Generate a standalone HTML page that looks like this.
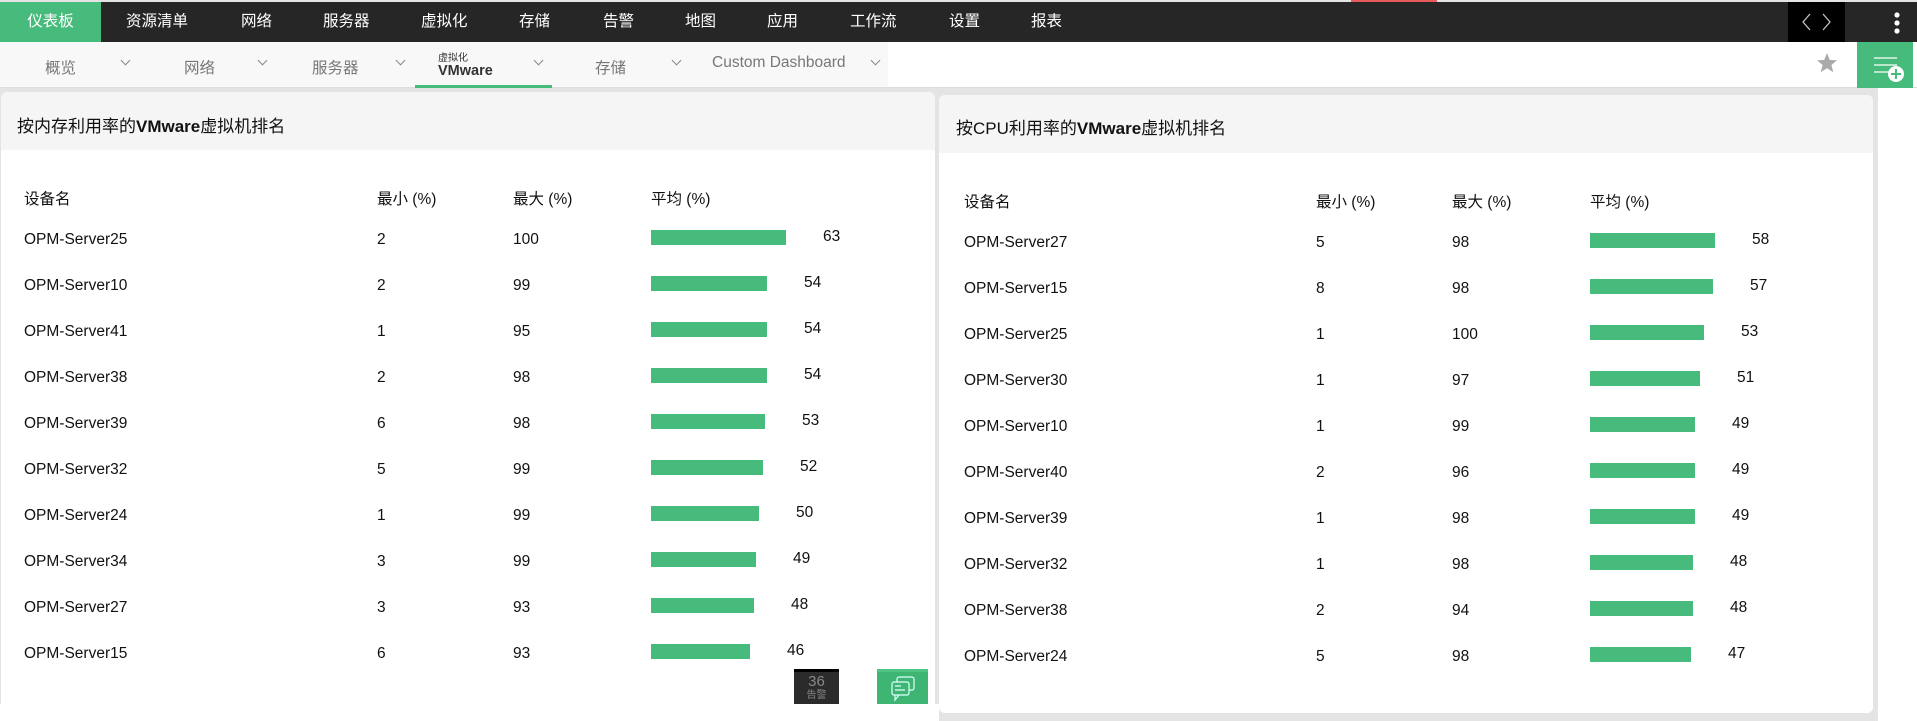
<!DOCTYPE html>
<html><head><meta charset="utf-8"><style>
*{margin:0;padding:0;box-sizing:border-box}
body{width:1917px;height:721px;position:relative;overflow:hidden;background:#fff;font-family:"Liberation Sans","Noto Sans CJK SC",sans-serif;color:#222}
.a{position:absolute;white-space:nowrap}
#top{position:absolute;left:0;top:0;width:1917px;height:2px;background:#e4e4e4}
#nav{position:absolute;left:0;top:2px;width:1917px;height:40px;background:#262626}
.ni{position:absolute;top:0;height:40px;line-height:40px;color:#fff;font-size:15.5px}
#sub{position:absolute;left:0;top:42px;width:1917px;height:46px;background:#fff;border-bottom:1px solid #ddd}
.si{position:absolute;top:14px;font-size:15.5px;color:#777}
.ch{position:absolute;top:15px;width:7px;height:7px;border-right:1px solid #888;border-bottom:1px solid #888;transform:rotate(45deg)}
.panel{position:absolute;background:#fff}
.ph{position:absolute;left:0;top:0;right:0;background:#f5f5f5;border-radius:6px 6px 0 0}
.t{position:absolute;font-size:15px;color:#111}
.bar{position:absolute;height:15px;background:#47bb7c}
</style></head><body>
<div style="position:absolute;left:0;top:88px;width:1917px;height:633px;background:#e4e4e4"></div>
<div style="position:absolute;left:1878px;top:88px;width:39px;height:633px;background:#fff"></div>
<div style="position:absolute;left:0;top:704px;width:939px;height:17px;background:#fff"></div>
<div id="top"></div>
<div style="position:absolute;left:1351px;top:0;width:86px;height:2px;background:#e85a5a"></div>
<div id="nav">
 <div class="ni" style="left:0;width:101px;background:#47bb7c;text-align:center">仪表板</div>
 <div class="ni" style="left:126px">资源清单</div>
 <div class="ni" style="left:241px">网络</div>
 <div class="ni" style="left:323px">服务器</div>
 <div class="ni" style="left:421px">虚拟化</div>
 <div class="ni" style="left:519px">存储</div>
 <div class="ni" style="left:603px">告警</div>
 <div class="ni" style="left:685px">地图</div>
 <div class="ni" style="left:767px">应用</div>
 <div class="ni" style="left:850px">工作流</div>
 <div class="ni" style="left:949px">设置</div>
 <div class="ni" style="left:1031px">报表</div>
 <div style="position:absolute;left:1788px;top:0;width:57px;height:40px;background:#000">
  <svg width="57" height="40"><path d="M22 12 L15 20 L22 28 M35 12 L42 20 L35 28" stroke="#ccc" stroke-width="1.2" fill="none"/></svg>
 </div>
 <svg style="position:absolute;left:1891px;top:8px" width="12" height="26"><circle cx="6" cy="5" r="2.6" fill="#fff"/><circle cx="6" cy="13" r="2.6" fill="#fff"/><circle cx="6" cy="21" r="2.6" fill="#fff"/></svg>
</div>
<div id="sub">
 <div style="position:absolute;left:0;top:0;width:888px;height:45px;background:#f8f8f8"></div>
 <div class="si" style="left:45px">概览</div><div class="ch" style="left:122px"></div>
 <div class="si" style="left:184px">网络</div><div class="ch" style="left:259px"></div>
 <div class="si" style="left:312px">服务器</div><div class="ch" style="left:397px"></div>
 <div class="a" style="left:438px;top:7px;font-size:10px;color:#333">虚拟化</div>
 <div class="a" style="left:438px;top:21px;font-size:14.5px;font-weight:bold;color:#333">VMware</div>
 <div class="ch" style="left:535px"></div>
 <div style="position:absolute;left:415px;top:43px;width:137px;height:3px;background:#47bb7c"></div>
 <div class="si" style="left:595px">存储</div><div class="ch" style="left:673px"></div>
 <div class="si" style="left:712px;top:12px">Custom Dashboard</div><div class="ch" style="left:872px"></div>
 <svg style="position:absolute;left:1815px;top:9px" width="24" height="24"><path d="M12 2 L14.8 9 L22 9.3 L16.4 14 L18.3 21.3 L12 17.2 L5.7 21.3 L7.6 14 L2 9.3 L9.2 9 Z" fill="#aaa"/></svg>
 <div style="position:absolute;left:1857px;top:0;width:56px;height:46px;background:#47bb7c">
  <svg width="56" height="46"><path d="M17 16 H40 M17 23 H40 M17 30 H32" stroke="#fff" stroke-width="1.3"/><circle cx="39" cy="32" r="8" fill="#fff"/><path d="M39 27 V37 M34 32 H44" stroke="#47bb7c" stroke-width="2"/></svg>
 </div>
</div>

<div class="panel" style="left:1px;top:92px;width:934px;height:612px;border-radius:6px 6px 0 0">
 <div class="ph" style="height:58px"></div>
 <div class="t" style="left:16px;top:20px;font-size:17px">按内存利用率的<b>VMware</b>虚拟机排名</div>
</div>
<div class="panel" style="left:939px;top:95px;width:934px;height:618px;border-radius:6px">
 <div class="ph" style="height:58px"></div>
 <div class="t" style="left:17px;top:19px;font-size:17px">按CPU利用率的<b>VMware</b>虚拟机排名</div>
</div>

<div id="rows"></div>
<div style="position:absolute;left:794px;top:669px;width:45px;height:35px;background:#2b2b2b;border-top:3px solid #000;color:#888;text-align:center">
 <div style="font-size:15px;line-height:16px;margin-top:2px">36</div><div style="font-size:10px;line-height:11px">告警</div></div>
<div style="position:absolute;left:877px;top:669px;width:51px;height:35px;background:#3fb574;border-top:3px solid #4fc484">
 <svg width="51" height="32"><rect x="20" y="5" width="17" height="13" rx="2" fill="none" stroke="#dff" stroke-width="1.2"/><rect x="15" y="10" width="17" height="13" rx="2" fill="#3fb574" stroke="#dff" stroke-width="1.2"/><path d="M18 23 L18 28 L22 23 M18 14 H24 M18 18 H28" stroke="#dff" stroke-width="1.2" fill="none"/></svg></div>

<script>
var L=[["OPM-Server25",2,100,63],["OPM-Server10",2,99,54],["OPM-Server41",1,95,54],["OPM-Server38",2,98,54],["OPM-Server39",6,98,53],["OPM-Server32",5,99,52],["OPM-Server24",1,99,50],["OPM-Server34",3,99,49],["OPM-Server27",3,93,48],["OPM-Server15",6,93,46]];
var R=[["OPM-Server27",5,98,58],["OPM-Server15",8,98,57],["OPM-Server25",1,100,53],["OPM-Server30",1,97,51],["OPM-Server10",1,99,49],["OPM-Server40",2,96,49],["OPM-Server39",1,98,49],["OPM-Server32",1,98,48],["OPM-Server38",2,94,48],["OPM-Server24",5,98,47]];
var h="";
function tbl(d,x0,x1,x2,x3,hy,y0){
 function t(x,y,s){h+='<div class="a" style="left:'+x+'px;top:'+(y-9)+'px;font-size:15.5px;color:#111">'+s+'</div>';}
 t(x0,hy,"设备名");t(x1,hy,"最小 (%)");t(x2,hy,"最大 (%)");t(x3,hy,"平均 (%)");
 d.forEach(function(r,i){var y=y0+i*46;t(x0,y,r[0]);t(x1,y,r[1]);t(x2,y,r[2]);
  var w=Math.round(r[3]*2.15);h+='<div class="bar" style="left:'+x3+'px;top:'+(y-10)+'px;width:'+w+'px"></div>';
  t(x3+w+37,y-3,r[3]);});
}
tbl(L,24,377,513,651,196,240);
tbl(R,964,1316,1452,1590,199,243);
document.getElementById("rows").innerHTML=h;
</script>
</body></html>
